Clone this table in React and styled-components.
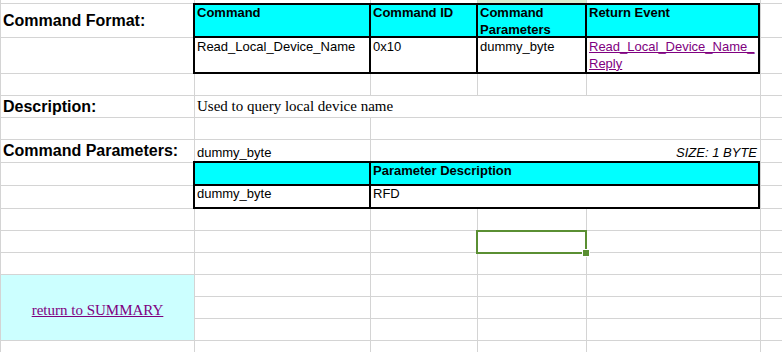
import React from "react";
import styled, { createGlobalStyle } from "styled-components";

const GlobalStyle = createGlobalStyle`
  html, body {
    margin: 0;
    padding: 0;
    background: #fff;
  }
  body {
    font-family: "Liberation Sans", Arial, sans-serif;
    color: #000;
  }
`;

/* Worksheet: the grey background shows through the 1px gaps as gridlines */
const Sheet = styled.div`
  box-sizing: border-box;
  width: 782px;
  height: 352px;
  overflow: hidden;
  display: grid;
  grid-template-columns: 193px 175px 106px 108px 173px 1fr;
  grid-template-rows:
    3px 33px 35px 21px 21px 21px 22px 22px 22px
    21px 21px 21px 21px 21px 21px 20px;
  gap: 1px;
  padding-left: 1px;
  background: #d4d4d4;
`;

const Cell = styled.div`
  position: relative;
  min-width: 0;
  grid-column: span ${(p) => p.$span || 1};
  grid-row: span ${(p) => p.$rows || 1};
  display: flex;
  align-items: ${(p) => p.$valign || "center"};
  justify-content: ${(p) => p.$align || "flex-start"};
  padding: 0 ${(p) => p.$padRight ?? 2}px ${(p) => p.$padBottom ?? 0}px 2px;
  background: ${(p) => p.$fill || "#fff"};
  white-space: nowrap;
  z-index: ${(p) => (p.$raised ? 3 : "auto")};
`;

const SectionLabel = styled.span`
  font-size: 16px;
  line-height: 18px;
  font-weight: bold;
`;

const SerifText = styled.span`
  font-family: "Liberation Serif", "Times New Roman", serif;
  font-size: 15px;
  line-height: 17px;
`;

const PlainText = styled.span`
  font-size: 13px;
  line-height: 16.5px;
  font-style: ${(p) => (p.$italic ? "italic" : "normal")};
`;

/* Bordered block laid over the gridlines with a medium black border */
const BoxedTable = styled.div`
  grid-column: span 4;
  grid-row: span 2;
  margin: ${(p) => p.$margin};
  display: grid;
  grid-template-columns: ${(p) => p.$cols};
  grid-template-rows: ${(p) => p.$rows};
  gap: 2px;
  border: 2px solid #000;
  background: #000;
  z-index: 1;
`;

const HeadCell = styled.div`
  grid-column: span ${(p) => p.$span || 1};
  background: #00ffff;
  font-size: 13px;
  line-height: 16.5px;
  font-weight: bold;
  padding: 0 2px;
  overflow: hidden;
`;

const DataCell = styled.div`
  grid-column: span ${(p) => p.$span || 1};
  background: #fff;
  font-size: 13px;
  line-height: 16.5px;
  padding: ${(p) => p.$padTop ?? 1}px 2px 0;
  overflow: hidden;
  white-space: nowrap;
`;

const EventLink = styled.a`
  color: #800080;
  text-decoration: underline;
`;

const SummaryLink = styled.a`
  font-family: "Liberation Serif", "Times New Roman", serif;
  font-size: 15px;
  line-height: 17px;
  color: #800080;
  text-decoration: underline;
  margin-top: 5px;
`;

/* Active-cell frame and its fill handle */
const SelectionFrame = styled.div`
  position: absolute;
  top: -1px;
  left: -2px;
  right: -1px;
  bottom: -2px;
  border: 2px solid #5a8f32;
  pointer-events: none;
`;

const FillHandle = styled.div`
  position: absolute;
  right: -5px;
  bottom: -5px;
  width: 6px;
  height: 6px;
  background: #5a8f32;
  border: 1px solid #fff;
`;

const blanks = (prefix, n = 6) =>
  Array.from({ length: n }, (_, i) => <Cell key={`${prefix}-${i}`} />);

export default function App() {
  return (
    <>
      <GlobalStyle />
      <Sheet>
        {/* row 1 (partly scrolled out) */}
        <Cell />
        <Cell />
        <Cell />
        <Cell $fill="#d7ebce" />
        <Cell />
        <Cell />

        {/* command format block */}
        <Cell>
          <SectionLabel>Command Format:</SectionLabel>
        </Cell>
        <BoxedTable
          $margin="-1px 0 -1px -2px"
          $cols="174px 105px 107px 171px"
          $rows="31px 34px"
        >
          <HeadCell>Command</HeadCell>
          <HeadCell>Command ID</HeadCell>
          <HeadCell>Command Parameters</HeadCell>
          <HeadCell>Return Event</HeadCell>
          <DataCell>Read_Local_Device_Name</DataCell>
          <DataCell>0x10</DataCell>
          <DataCell>dummy_byte</DataCell>
          <DataCell>
            <EventLink href="#">
              Read_Local_Device_Name_
              <br />
              Reply
            </EventLink>
          </DataCell>
        </BoxedTable>
        <Cell />
        <Cell />
        <Cell />

        {/* spacer row */}
        {blanks("r4")}

        {/* description */}
        <Cell>
          <SectionLabel>Description:</SectionLabel>
        </Cell>
        <Cell $span={4}>
          <SerifText>Used to query local device name</SerifText>
        </Cell>
        <Cell />

        <Cell />
        <Cell />
        <Cell $span={3} />
        <Cell />

        {/* command parameters */}
        <Cell>
          <SectionLabel>Command Parameters:</SectionLabel>
        </Cell>
        <Cell $valign="flex-end" $padBottom={1}>
          <PlainText>dummy_byte</PlainText>
        </Cell>
        <Cell $span={3} $valign="flex-end" $align="flex-end" $padBottom={1} $padRight={3}>
          <PlainText $italic>SIZE: 1 BYTE</PlainText>
        </Cell>
        <Cell />

        <Cell />
        <BoxedTable
          $margin="-2px 0 -1px -2px"
          $cols="174px 387px"
          $rows="21px 21px"
        >
          <HeadCell />
          <HeadCell>Parameter Description</HeadCell>
          <DataCell $padTop={0}>dummy_byte</DataCell>
          <DataCell $padTop={0}>RFD</DataCell>
        </BoxedTable>
        <Cell />
        <Cell />
        <Cell />

        {blanks("r10")}

        {/* row holding the active cell */}
        <Cell />
        <Cell />
        <Cell />
        <Cell $raised>
          <SelectionFrame>
            <FillHandle />
          </SelectionFrame>
        </Cell>
        <Cell />
        <Cell />

        {blanks("r12")}

        {/* navigation link block */}
        <Cell $rows={3} $align="center" $fill="#ccffff">
          <SummaryLink href="#">return to SUMMARY</SummaryLink>
        </Cell>
        {blanks("r13", 5)}
        {blanks("r14", 5)}
        {blanks("r15", 5)}

        {blanks("r16")}
      </Sheet>
    </>
  );
}
